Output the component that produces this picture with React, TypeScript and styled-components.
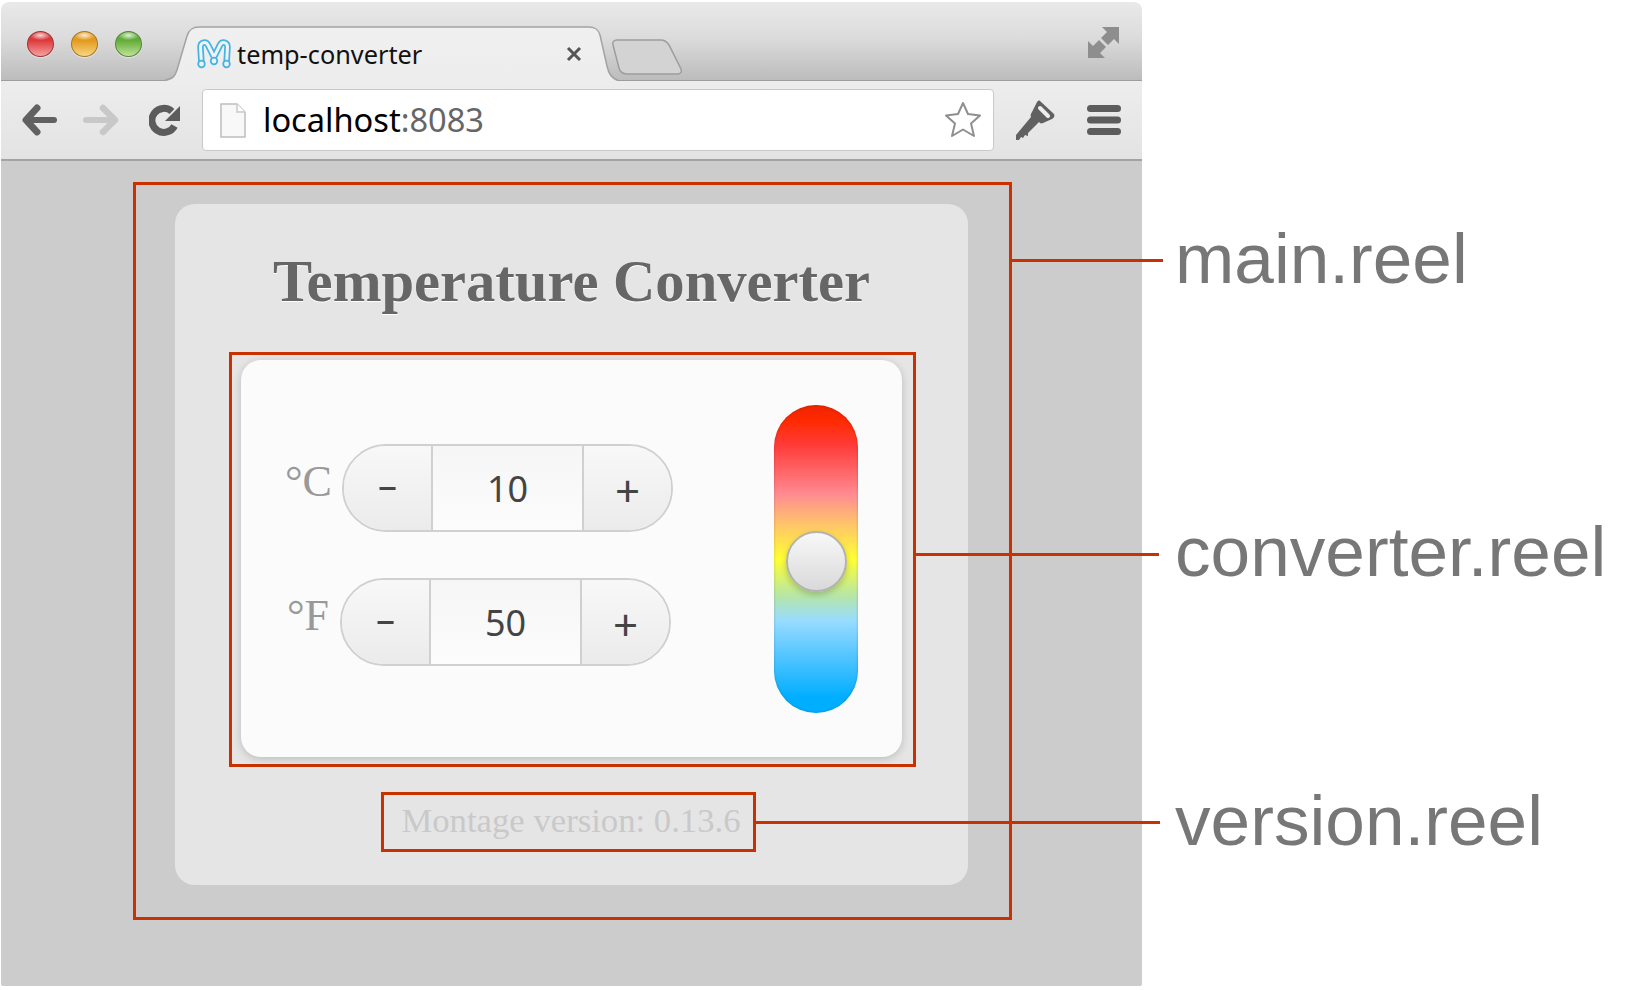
import styled, { createGlobalStyle } from "styled-components";

const GlobalStyle = createGlobalStyle`
  html, body {
    margin: 0;
    padding: 0;
    background: #fff;
  }
`;

const serif = `"Liberation Serif", "Times New Roman", serif`;
const lucida = `"Noto Sans", "DejaVu Sans", sans-serif`;
const annotationRed = "#c93200";

const Page = styled.div`
  display: flex;
  width: 1627px;
  height: 990px;
  overflow: hidden;
`;

const Browser = styled.div`
  width: 1141px;
  height: 984px;
  margin: 2px 0 0 1px;
  flex: none;
  display: flex;
  flex-direction: column;
  border-radius: 8px 8px 2px 2px;
`;

const TabStrip = styled.div`
  height: 79px;
  flex: none;
  display: flex;
  align-items: flex-end;
  padding: 0 22px 0 26px;
  box-sizing: border-box;
  border-radius: 8px 8px 0 0;
  border-bottom: 1px solid #9d9d9d;
  background: linear-gradient(#e9e9e9 0%, #dcdcdc 45%, #bcbcbc 100%);
`;

const Lights = styled.div`
  display: flex;
  gap: 17px;
  align-self: flex-start;
  margin-top: 29px;
  width: 138px;
  flex: none;
`;

const Light = styled.span<{ $top: string; $bottom: string; $dark: string }>`
  width: 27px;
  height: 26px;
  border-radius: 50%;
  box-sizing: border-box;
  border: 1px solid ${(p) => p.$dark};
  background:
    radial-gradient(ellipse 42% 20% at 50% 14%, rgba(255, 255, 255, 0.8), transparent),
    linear-gradient(${(p) => p.$top} 35%, ${(p) => p.$bottom} 100%);
  box-shadow: 0 1px 1px rgba(255, 255, 255, 0.5);
`;

const Tab = styled.div`
  position: relative;
  width: 453px;
  height: 55px;
  flex: none;
  margin-bottom: -1px;
  display: flex;
  align-items: center;
  padding: 0 36px 0 31px;
  box-sizing: border-box;
  z-index: 1;
`;

const TabShape = styled.svg`
  position: absolute;
  inset: 0;
  width: 100%;
  height: 100%;
`;

const Favicon = styled.svg`
  position: relative;
  width: 36px;
  height: 30px;
  flex: none;
`;

const TabTitle = styled.span`
  position: relative;
  margin-left: 5px;
  font-family: ${lucida};
  font-size: 25.3px;
  color: #111;
  flex: 1;
`;

const TabClose = styled.svg`
  position: relative;
  width: 16px;
  height: 16px;
  flex: none;
`;

const NewTab = styled.svg`
  width: 72px;
  height: 36px;
  flex: none;
  align-self: flex-start;
  margin: 37px 0 0 -7px;
`;

const ExpandIcon = styled.svg`
  width: 33px;
  height: 33px;
  flex: none;
  align-self: flex-start;
  margin: 24px 0 0 auto;
`;

const Toolbar = styled.div`
  height: 80px;
  flex: none;
  display: flex;
  align-items: center;
  padding-left: 21px;
  box-sizing: border-box;
  border-bottom: 2px solid #a3a3a3;
  background: linear-gradient(#ededed, #e3e3e3);
`;

const ToolIcon = styled.svg<{ $left: number }>`
  flex: none;
  margin-left: ${(p) => p.$left}px;
`;

const Omnibox = styled.div`
  width: 792px;
  height: 62px;
  margin-left: 21px;
  flex: none;
  display: flex;
  align-items: center;
  padding: 0 11px 0 17px;
  box-sizing: border-box;
  background: #fff;
  border: 1px solid #c9c9c9;
  border-radius: 4px;
`;

const DocIcon = styled.svg`
  width: 26px;
  height: 35px;
  flex: none;
`;

const Url = styled.span`
  margin-left: 17px;
  font-family: ${lucida};
  font-size: 32.6px;
  color: #000;
  flex: 1;
  position: relative;
  top: -1px;
`;

const Port = styled.span`
  color: #666;
`;

const Viewport = styled.div`
  flex: 1;
  background: #cccccc;
  padding: 21px 0 0 132px;
  box-sizing: border-box;
  border-radius: 0 0 2px 2px;
`;

const Outline = styled.div`
  position: relative;
  box-sizing: border-box;
  border: 3px solid ${annotationRed};
`;

const Connector = styled.span<{ $top: number; $width: number }>`
  position: absolute;
  left: 100%;
  top: ${(p) => p.$top}px;
  width: ${(p) => p.$width}px;
  height: 3px;
  margin-left: 3px;
  background: ${annotationRed};
`;

const MainOutline = styled(Outline)`
  width: 879px;
  height: 738px;
  padding: 19px 0 0 39px;
`;

const Card = styled.div`
  width: 793px;
  height: 681px;
  display: flex;
  flex-direction: column;
  align-items: flex-start;
  background: #e5e5e5;
  border-radius: 20px;
`;

const Title = styled.h1`
  margin: 45px 0 0;
  width: 100%;
  height: 65px;
  text-align: center;
  font-family: ${serif};
  font-size: 58.6px;
  line-height: 65px;
  font-weight: bold;
  color: #666;
  text-shadow: 0 1px 0 #fff;
`;

const ConverterOutline = styled(Outline)`
  width: 687px;
  height: 415px;
  margin: 38px 0 0 54px;
  padding: 5px 11px 7px 9px;
`;

const Panel = styled.div`
  height: 100%;
  display: flex;
  justify-content: space-between;
  padding: 84px 44px 0 0;
  box-sizing: border-box;
  background: #fbfbfb;
  border-radius: 20px;
  box-shadow: 0 2px 8px rgba(0, 0, 0, 0.18);
`;

const Fields = styled.div`
  display: flex;
  flex-direction: column;
  gap: 46px;
`;

const Field = styled.div<{ $left: number }>`
  display: flex;
  align-items: center;
  margin-left: ${(p) => p.$left}px;
`;

const Unit = styled.label<{ $width: number }>`
  width: ${(p) => p.$width}px;
  margin-right: 11px;
  margin-bottom: 12px;
  text-align: right;
  font-family: ${serif};
  font-size: 44px;
  line-height: 1;
  color: #999;
`;

const Stepper = styled.div`
  width: 331px;
  height: 88px;
  display: flex;
  box-sizing: border-box;
  border: 2px solid #d0d0d0;
  border-radius: 44px;
  overflow: hidden;
  font-family: ${lucida};
  color: #444;
`;

const StepButton = styled.div<{ $size: number; $up: number; $down: number }>`
  width: 87px;
  flex: none;
  display: flex;
  align-items: center;
  justify-content: center;
  box-sizing: border-box;
  padding: ${(p) => p.$down}px 0 ${(p) => p.$up}px;
  font-size: ${(p) => p.$size}px;
  background: linear-gradient(#f8f8f8, #ebebeb);
`;

const StepValue = styled.div`
  flex: 1;
  display: flex;
  align-items: center;
  justify-content: center;
  font-size: 36px;
  border-left: 2px solid #d0d0d0;
  border-right: 2px solid #d0d0d0;
  background: linear-gradient(#f6f6f6, #fcfcfc);
`;

const Gauge = styled.div`
  width: 84px;
  height: 308px;
  margin-top: -39px;
  display: flex;
  align-items: center;
  justify-content: center;
  border-radius: 42px;
  background: linear-gradient(
    #ee2400 0%,
    #ff2a00 5%,
    #ff3b38 13%,
    #ff8b92 29%,
    #ffbb72 37%,
    #ffff33 50%,
    #b6e6a8 62%,
    #98dcff 70%,
    #5cc8ff 80%,
    #00aeff 95%
  );
  box-shadow: inset 0 0 3px rgba(0, 0, 0, 0.2);
`;

const Thumb = styled.div`
  width: 61px;
  height: 61px;
  margin-top: 5px;
  box-sizing: border-box;
  border-radius: 50%;
  border: 2px solid #b2b2b2;
  background: linear-gradient(#f8f8f8, #d9d9d9);
  box-shadow: 0 3px 6px rgba(0, 0, 0, 0.2);
`;

const VersionOutline = styled(Outline)`
  width: 375px;
  height: 60px;
  margin: 25px 0 0 206px;
  padding-left: 5px;
  display: flex;
  align-items: center;
  justify-content: center;
`;

const Version = styled.span`
  font-family: ${serif};
  font-size: 34.7px;
  color: #c9c9c9;
  white-space: nowrap;
  position: relative;
  top: -1px;
`;

const Annotations = styled.aside`
  flex: none;
  margin-left: 33px;
  padding-top: 219px;
  display: flex;
  flex-direction: column;
`;

const Annotation = styled.div<{ $top: number }>`
  margin-top: ${(p) => p.$top}px;
  font-family: "Liberation Sans", Arial, sans-serif;
  font-size: 71.2px;
  line-height: 80px;
  color: #777;
  white-space: nowrap;
`;

const Steppers = [
  { unit: "°C", value: "10", left: 44, labelWidth: 46 },
  { unit: "°F", value: "50", left: 42, labelWidth: 46 },
];

const App = () => {
  return (
    <Page>
      <GlobalStyle />
      <Browser>
        <TabStrip>
          <Lights>
            <Light $top="#dd3a3c" $bottom="#f7a0a0" $dark="#9c3436" />
            <Light $top="#e39a1e" $bottom="#f8d680" $dark="#a5782a" />
            <Light $top="#63ac38" $bottom="#bfe29a" $dark="#55863c" />
          </Lights>
          <Tab>
            <TabShape viewBox="0 0 453 55" preserveAspectRatio="none">
              <defs>
                <linearGradient id="tabFill" x1="0" y1="0" x2="0" y2="1">
                  <stop offset="0" stopColor="#f0f0f0" />
                  <stop offset="1" stopColor="#ededed" />
                </linearGradient>
              </defs>
              <path d="M0 55C8 54 10 50 12 44L22 10C24 4 27 1 34 1H424C430 1 433 3 435 9L442 40C444 50 448 54 453 55Z" fill="url(#tabFill)" />
              <path d="M0 54C8 53 10 50 12 44L22 10C24 4 27 1 34 1H424C430 1 433 3 435 9L442 40C444 50 448 53 453 54" fill="none" stroke="#a3a3a3" strokeWidth="1.5" />
            </TabShape>
            <Favicon viewBox="0 0 36 30" fill="none" strokeLinejoin="round" strokeLinecap="round">
              <path d="M5.500 25L4.500 8C4.500 3 10 2 12 6L18 18L24 6C26 2 31.500 3 31.500 8L30.500 25" stroke="#45b4e4" strokeWidth="6.500" />
              <path d="M5.500 25L4.500 8C4.500 3 10 2 12 6L18 18L24 6C26 2 31.500 3 31.500 8L30.500 25" stroke="#eef4f7" strokeWidth="3" />
              <circle cx="5.500" cy="25" r="3.300" fill="#eef4f7" stroke="#45b4e4" strokeWidth="1.800" />
              <circle cx="18" cy="22" r="3.300" fill="#eef4f7" stroke="#45b4e4" strokeWidth="1.800" />
              <circle cx="30.500" cy="25" r="3.300" fill="#eef4f7" stroke="#45b4e4" strokeWidth="1.800" />
            </Favicon>
            <TabTitle>temp-converter</TabTitle>
            <TabClose viewBox="0 0 16 16">
              <path d="M2 2L14 14M14 2L2 14" stroke="#555" strokeWidth="3" />
            </TabClose>
          </Tab>
          <NewTab viewBox="0 0 72 36">
            <path d="M2 6C1 3 3 1 6 1H50C54 1 56 3 58 6L70 30C71 33 70 35 66 35H16C11 35 9 33 8 29Z" fill="#d3d3d3" stroke="#9d9d9d" strokeWidth="1.5" />
          </NewTab>
          <ExpandIcon viewBox="0 0 33 33" fill="#8e8e8e">
            <path d="M15 1H32V18L27 13L21 19L14 12L20 6Z" />
            <path d="M18 32H1V15L6 20L12 14L19 21L13 27Z" />
          </ExpandIcon>
        </TabStrip>
        <Toolbar>
          <ToolIcon $left={0} width="35" height="32" viewBox="0 0 35 32" fill="none" stroke="#616161" strokeLinecap="round" strokeLinejoin="round">
            <path d="M32 16H6" strokeWidth="6" />
            <path d="M15 4L4 16L15 28" strokeWidth="7" />
          </ToolIcon>
          <ToolIcon $left={26} width="36" height="32" viewBox="0 0 36 32" fill="none" stroke="#c8c8c8" strokeLinecap="round" strokeLinejoin="round">
            <path d="M3 16H29" strokeWidth="6" />
            <path d="M20 4L32 16L20 28" strokeWidth="6.500" />
          </ToolIcon>
          <ToolIcon $left={30} width="32" height="32" viewBox="0 0 32 32" fill="none">
            <path d="M25.500 22A12 12 0 1 1 23 7.500" stroke="#5c5c5c" strokeWidth="7" />
            <path d="M31 2V17H16Z" fill="#5c5c5c" />
          </ToolIcon>
          <Omnibox>
            <DocIcon viewBox="0 0 26 35">
              <path d="M1 1H17L25 9V34H1Z" fill="#f8f8f8" stroke="#bdbdbd" strokeWidth="1.5" />
              <path d="M17 1V9H25" fill="#fff" stroke="#c9c9c9" strokeWidth="1.5" />
            </DocIcon>
            <Url>
              localhost<Port>:8083</Port>
            </Url>
            <svg width="38" height="38" viewBox="0 0 38 38">
              <path d="M19 2L24 13L36 14.500L27 22.500L30 35L19 28.500L8 35L11 22.500L2 14.500L14 13Z" fill="#fff" stroke="#8f8f8f" strokeWidth="2" strokeLinejoin="round" />
            </svg>
          </Omnibox>
          <ToolIcon $left={22} width="39" height="40" viewBox="0 0 39 40">
            <path d="M24 1L38 14C39 16 38 18 36 19L27 23C25 24 24 23 23 22L12 33V36L9 35L7 38L5 37L3 40H0V35L15 17C14 15 15 14 16 12L21 2C22 1 23 0 24 1Z" fill="#616161" />
            <path d="M24 8L32 16" stroke="#eee" strokeWidth="4" strokeLinecap="round" />
          </ToolIcon>
          <ToolIcon $left={32} width="34" height="30" viewBox="0 0 34 30" fill="#5c5c5c">
            <rect x="0" y="0" width="34" height="7" rx="3.500" />
            <rect x="0" y="11.500" width="34" height="7" rx="3.500" />
            <rect x="0" y="23" width="34" height="7" rx="3.500" />
          </ToolIcon>
        </Toolbar>
        <Viewport>
          <MainOutline>
            <Connector $top={74} $width={151} />
            <Card>
              <Title>Temperature Converter</Title>
              <ConverterOutline>
                <Connector $top={198} $width={243} />
                <Panel>
                  <Fields>
                    {Steppers.map((item) => (
                      <Field key={item.unit} $left={item.left}>
                        <Unit $width={item.labelWidth}>{item.unit}</Unit>
                        <Stepper>
                          <StepButton $size={38} $up={8} $down={0}>–</StepButton>
                          <StepValue>{item.value}</StepValue>
                          <StepButton $size={44} $up={0} $down={4}>+</StepButton>
                        </Stepper>
                      </Field>
                    ))}
                  </Fields>
                  <Gauge>
                    <Thumb />
                  </Gauge>
                </Panel>
              </ConverterOutline>
              <VersionOutline>
                <Connector $top={26} $width={404} />
                <Version>Montage version: 0.13.6</Version>
              </VersionOutline>
            </Card>
          </MainOutline>
        </Viewport>
      </Browser>
      <Annotations>
        <Annotation $top={0}>main.reel</Annotation>
        <Annotation $top={213}>converter.reel</Annotation>
        <Annotation $top={189}>version.reel</Annotation>
      </Annotations>
    </Page>
  );
};

export default App;
